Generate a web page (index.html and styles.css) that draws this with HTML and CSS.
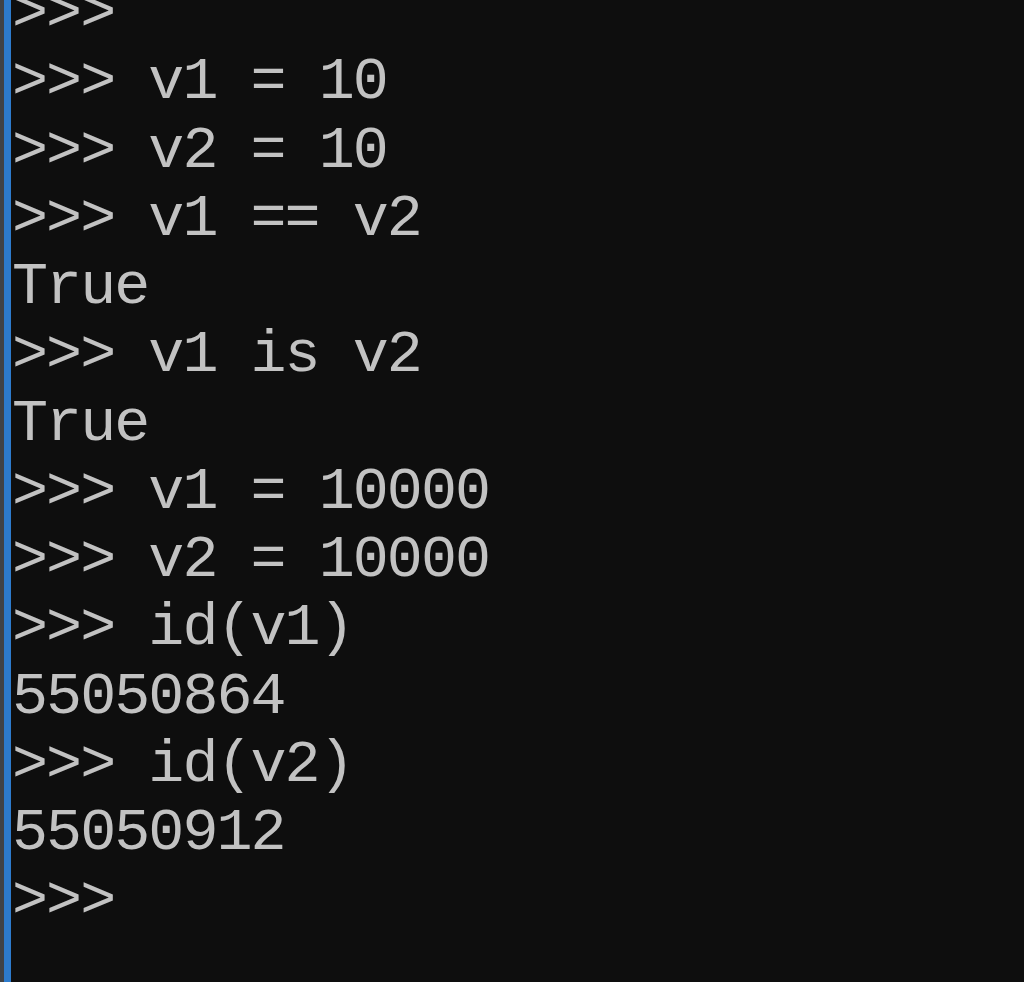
FILE: index.html
```html
<!DOCTYPE html>
<html lang="en">
<head>
<meta charset="utf-8">
<title>Python console</title>
<link rel="stylesheet" href="styles.css">
</head>
<body>
<div class="console">
  <div class="edge"></div>
  <div class="accent"></div>
  <pre class="output">&gt;&gt;&gt;
&gt;&gt;&gt; v1 = 10
&gt;&gt;&gt; v2 = 10
&gt;&gt;&gt; v1 == v2
True
&gt;&gt;&gt; v1 is v2
True
&gt;&gt;&gt; v1 = 10000
&gt;&gt;&gt; v2 = 10000
&gt;&gt;&gt; id(v1)
55050864
&gt;&gt;&gt; id(v2)
55050912
&gt;&gt;&gt;</pre>
</div>
</body>
</html>
```

FILE: styles.css
```css
html, body {
  margin: 0;
  padding: 0;
  height: 100%;
  background: #0e0e0e;
  overflow: hidden;
}

.console {
  display: flex;
  height: 100%;
  background: #0e0e0e;
}

.edge {
  width: 4px;
  flex: none;
  background: #404347;
}

.accent {
  width: 7px;
  flex: none;
  background: #2d7bcc;
}

.output {
  margin: -20px 0 0 1px;
  font-family: "Liberation Mono", "Courier New", monospace;
  font-size: 60px;
  letter-spacing: -1.93px;
  line-height: 68.27px;
  color: #c2c2c2;
  white-space: pre;
}
```
